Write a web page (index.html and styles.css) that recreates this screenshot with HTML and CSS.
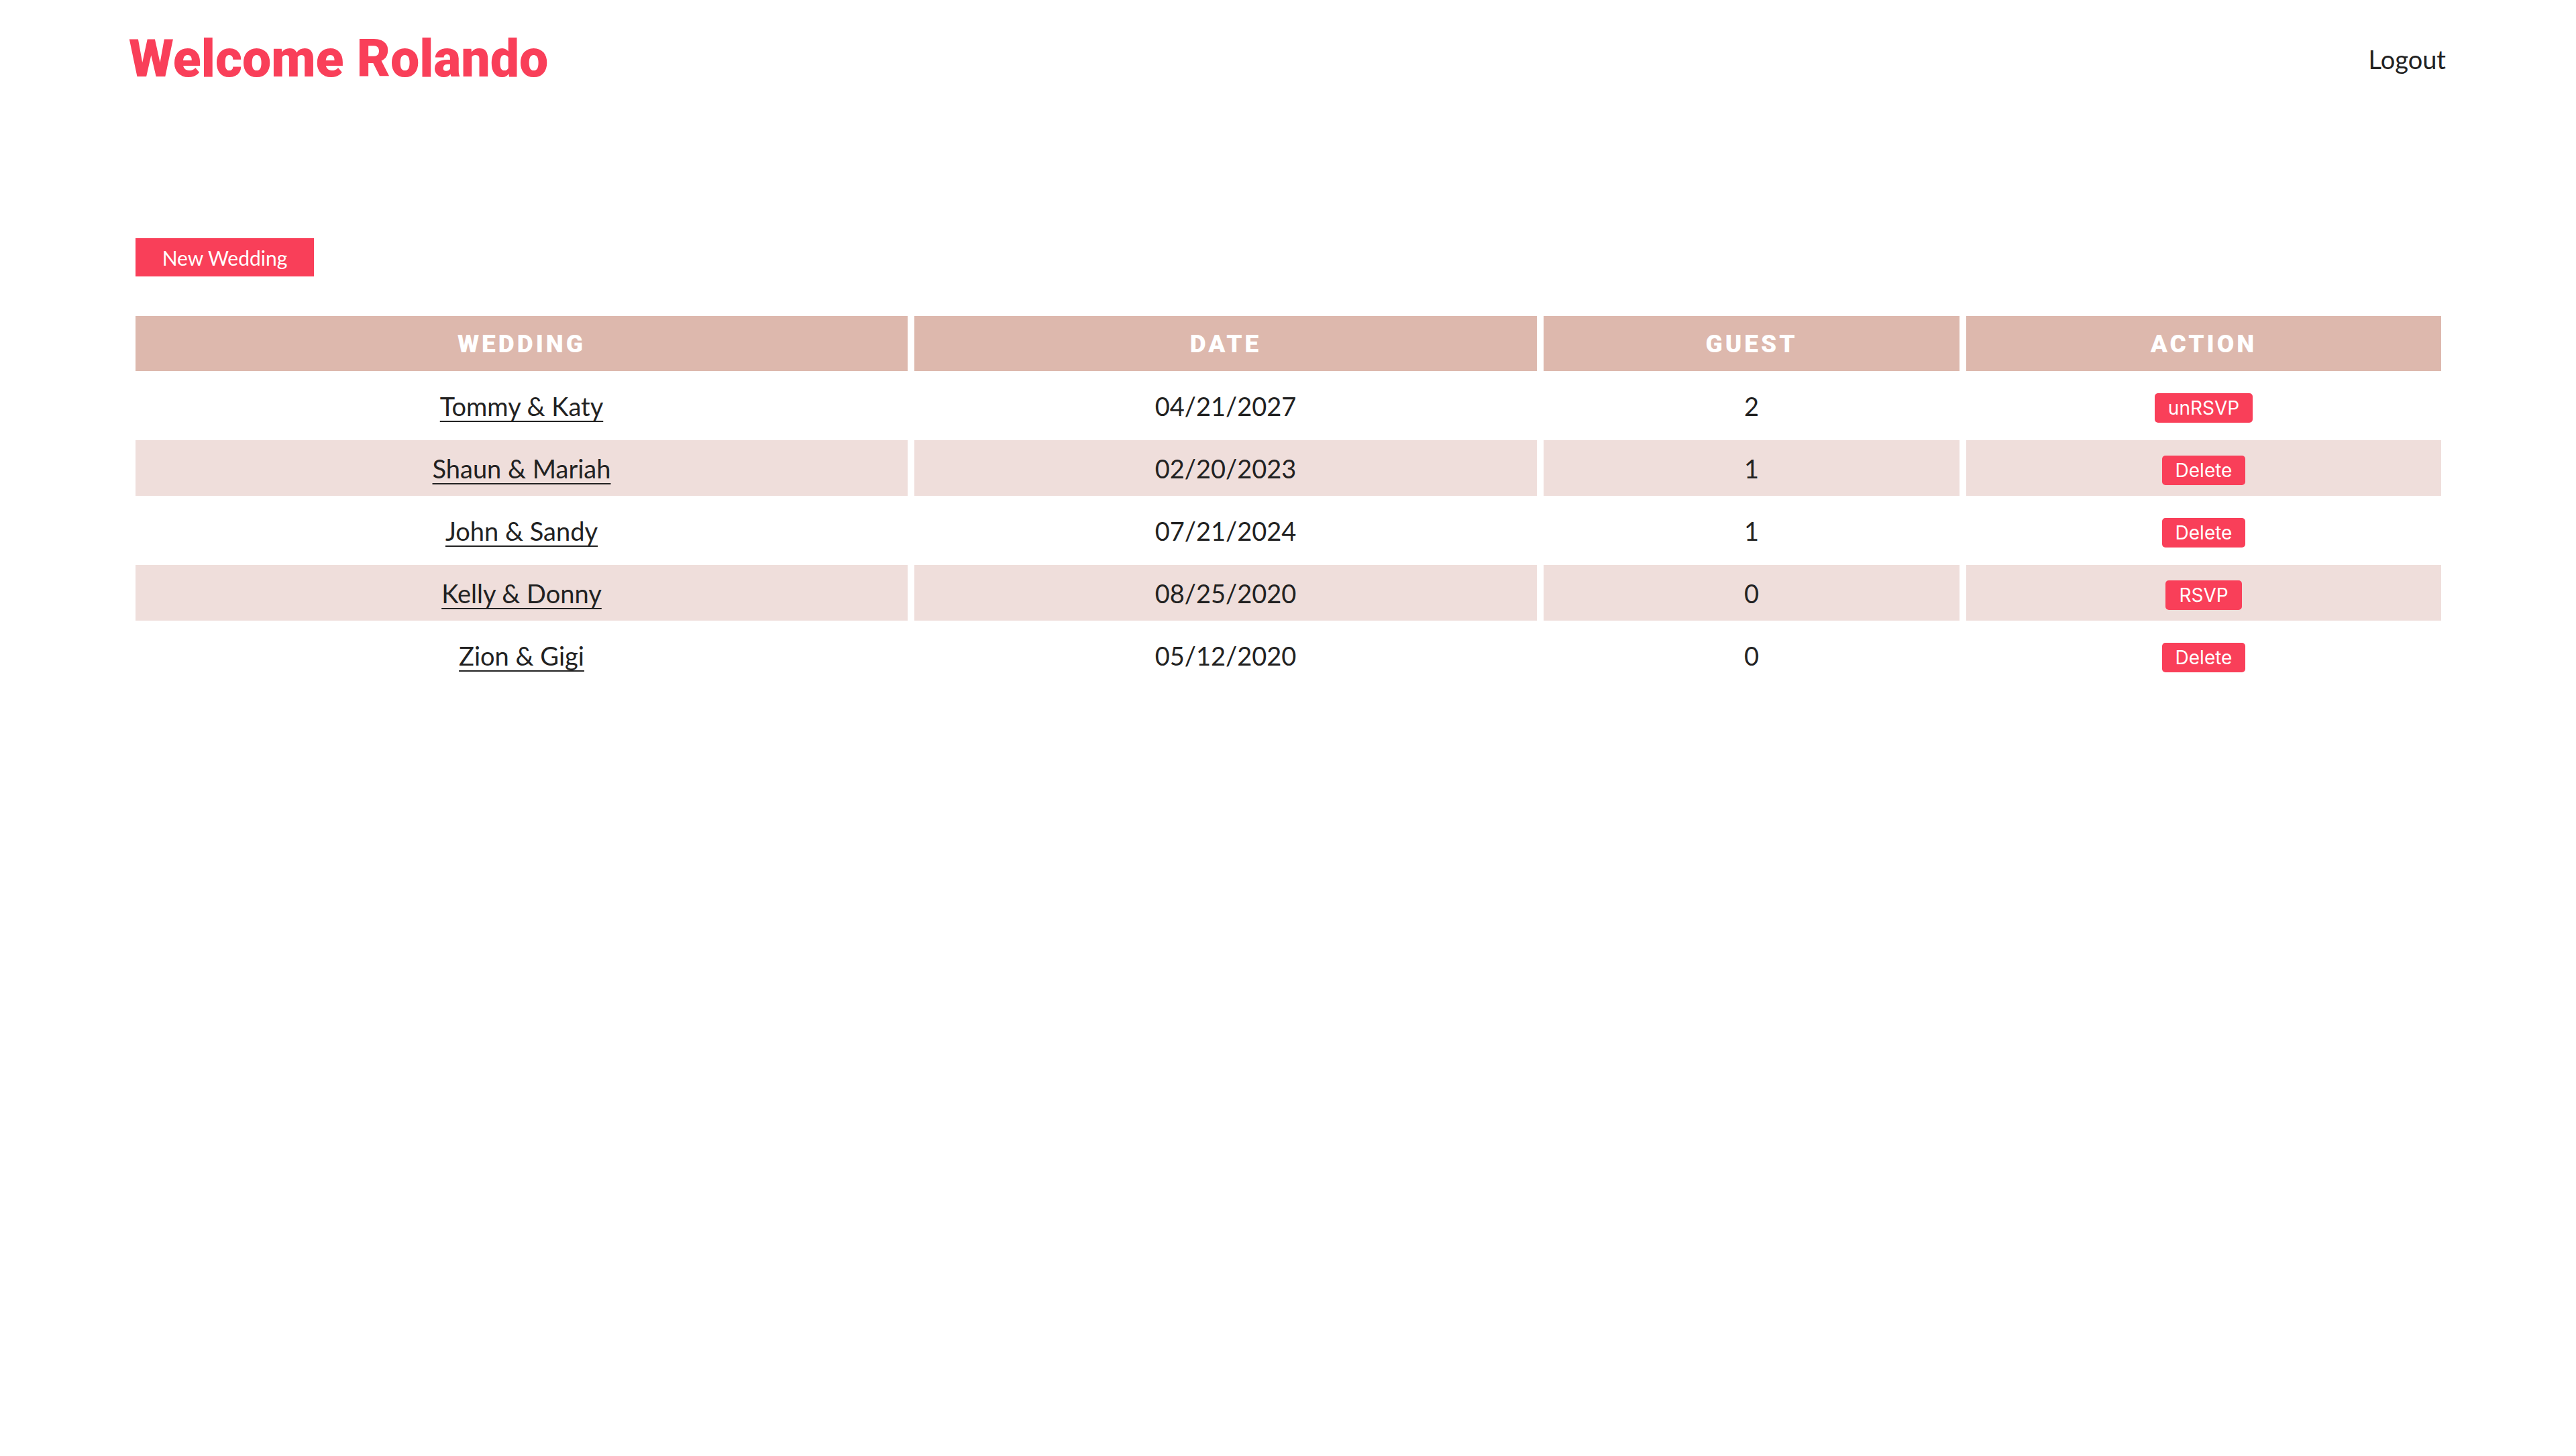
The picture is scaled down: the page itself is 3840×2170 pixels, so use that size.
FILE: index.html
```html
<!DOCTYPE html>
<html>
<head>
<meta charset="utf-8">
<title>Weddings</title>
<link rel="stylesheet" href="styles.css">
</head>
<body>
<header class="topbar">
  <h1 class="welcome">Welcome Rolando</h1>
  <a class="logout" href="#">Logout</a>
</header>
<main class="content">
  <button class="new-btn">New Wedding</button>
  <table class="weddings">
    <colgroup>
      <col class="c1"><col class="c2"><col class="c3"><col class="c4">
    </colgroup>
    <thead>
      <tr><th>Wedding</th><th>Date</th><th>Guest</th><th>Action</th></tr>
    </thead>
    <tbody>
      <tr><td><a href="#">Tommy &amp; Katy</a></td><td>04/21/2027</td><td>2</td><td><button class="act">unRSVP</button></td></tr>
      <tr class="alt"><td><a href="#">Shaun &amp; Mariah</a></td><td>02/20/2023</td><td>1</td><td><button class="act">Delete</button></td></tr>
      <tr><td><a href="#">John &amp; Sandy</a></td><td>07/21/2024</td><td>1</td><td><button class="act">Delete</button></td></tr>
      <tr class="alt"><td><a href="#">Kelly &amp; Donny</a></td><td>08/25/2020</td><td>0</td><td><button class="act">RSVP</button></td></tr>
      <tr><td><a href="#">Zion &amp; Gigi</a></td><td>05/12/2020</td><td>0</td><td><button class="act">Delete</button></td></tr>
    </tbody>
  </table>
</main>
</body>
</html>
```
FILE: styles.css
```css
html, body {
  margin: 0;
  padding: 0;
  background: #ffffff;
}
body {
  font-family: "Lato", "Liberation Sans", sans-serif;
  color: #222222;
}
.topbar {
  display: flex;
  justify-content: space-between;
  align-items: center;
  padding: 43px 192px 0 192px;
}
.welcome {
  margin: 0;
  font-family: "Roboto", "Liberation Sans", sans-serif;
  font-weight: 900;
  font-size: 77px;
  letter-spacing: 0;
  line-height: normal;
  color: #f93f59;
}
.logout {
  font-size: 38px;
  color: #222222;
  text-decoration: none;
  margin-right: 2px;
}
.content {
  padding: 222px 192px 0 192px;
}
.new-btn {
  display: block;
  margin-left: 10px;
  width: 266px;
  height: 57px;
  border: none;
  border-radius: 0;
  background: #f93f59;
  color: #ffffff;
  font-family: "Lato", "Liberation Sans", sans-serif;
  font-size: 30px;
  padding: 0;
  cursor: pointer;
}
.weddings {
  margin-top: 49px;
  width: 3456px;
  border-collapse: separate;
  border-spacing: 10px;
  table-layout: fixed;
}
.c1 { width: 1151px; }
.c2 { width: 928px; }
.c3 { width: 620px; }
.c4 { width: 708px; }
.weddings th {
  height: 82px;
  padding: 0;
  background: #ddb8ad;
  color: #ffffff;
  font-family: "Roboto", "Liberation Sans", sans-serif;
  font-weight: 900;
  font-size: 37px;
  letter-spacing: 4px;
  text-transform: uppercase;
  text-align: center;
  vertical-align: middle;
}
.weddings td {
  height: 83px;
  padding: 0;
  font-size: 38px;
  text-align: center;
  vertical-align: middle;
}
.weddings tr.alt td {
  background: #efdedb;
}
.weddings a {
  color: #222222;
  text-decoration: underline;
  text-decoration-thickness: 2px;
  text-underline-offset: 7px;
}
.act {
  height: 44px;
  padding: 0 20px;
  border: none;
  border-radius: 5px;
  background: #f93f59;
  color: #ffffff;
  font-family: "Inter", "Roboto", sans-serif;
  font-size: 28px;
  vertical-align: middle;
  cursor: pointer;
}
```
